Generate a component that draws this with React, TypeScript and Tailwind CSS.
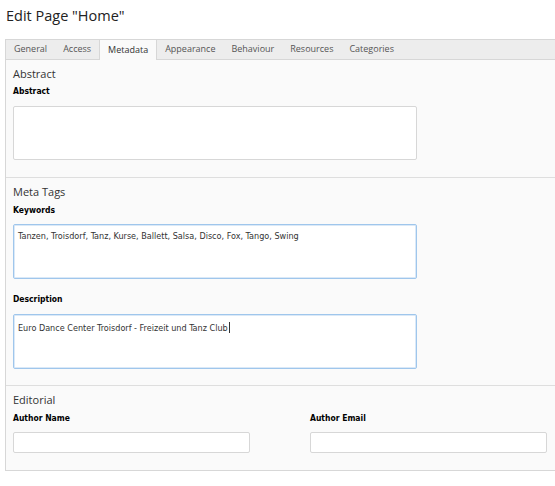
const tabs = [
  "General",
  "Access",
  "Metadata",
  "Appearance",
  "Behaviour",
  "Resources",
  "Categories",
];

function Tab({ label, active }: { label: string; active?: boolean }) {
  if (active) {
    return (
      <li className="-mb-px flex h-[21px] items-center border-x border-t border-[#d7d7d7] bg-[#fafafa] px-[8px] text-[#333]">
        {label}
      </li>
    );
  }
  return (
    <li className="flex h-[20px] items-center px-[8px] text-[#555]">{label}</li>
  );
}

function Label({ text }: { text: string }) {
  return (
    <div className="h-[12px] text-[8.5px] leading-[12px] font-bold text-black [font-family:'DejaVu_Sans_Condensed','DejaVu_Sans',sans-serif]">
      {text}
    </div>
  );
}

function Header({ text }: { text: string }) {
  return (
    <div className="h-[16px] text-[11px] leading-[16px] text-[#333]">{text}</div>
  );
}

function Area({
  value,
  blue,
  caret,
}: {
  value?: string;
  blue?: boolean;
  caret?: boolean;
}) {
  return (
    <div
      className={
        blue
          ? "h-[55px] w-[404px] rounded-[2px] border border-[#9fc6ec] bg-white px-[4px] py-[5px] text-[9px] leading-[12px] text-[#333] shadow-[inset_0_0_0_1px_#dbe9f7] [font-family:'DejaVu_Sans_Condensed','DejaVu_Sans',sans-serif]"
          : "h-[54px] w-[404px] rounded-[2px] border border-[#d7d7d7] bg-white px-[4px] py-[5px] text-[9px] leading-[12px] text-[#333] [font-family:'DejaVu_Sans_Condensed','DejaVu_Sans',sans-serif]"
      }
    >
      {value}
      {caret && (
        <span className="ml-px inline-block h-[11px] w-px translate-y-[2px] bg-[#333]" />
      )}
    </div>
  );
}

export default function App() {
  return (
    <div className="h-[486px] w-[555px] overflow-hidden bg-white [font-family:'Open_Sans',sans-serif]">
      <h1 className="pt-[5px] pl-[6px] text-[14.5px] leading-[22px] text-[#222]">
        Edit Page "Home"
      </h1>

      <div className="mt-[12px] ml-[5px] w-[560px]">
        <ul className="flex h-[21px] items-end border border-[#d7d7d7] bg-[#ededed] text-[9px]">
          {tabs.map((t) => (
            <Tab key={t} label={t} active={t === "Metadata"} />
          ))}
        </ul>

        <div className="border-x border-b border-[#d7d7d7] bg-[#fafafa]">
          <section className="border-b border-[#dedede] px-[7px] pt-[6px] pb-[17px]">
            <Header text="Abstract" />
            <div className="mt-[3px]">
              <Label text="Abstract" />
            </div>
            <div className="mt-[9px]">
              <Area />
            </div>
          </section>

          <section className="border-b border-[#dedede] px-[7px] pt-[6px] pb-[16px]">
            <Header text="Meta Tags" />
            <div className="mt-[4px]">
              <Label text="Keywords" />
            </div>
            <div className="mt-[8px]">
              <Area
                blue
                value="Tanzen, Troisdorf, Tanz, Kurse, Ballett, Salsa, Disco, Fox, Tango, Swing"
              />
            </div>
            <div className="mt-[14px]">
              <Label text="Description" />
            </div>
            <div className="mt-[9px]">
              <Area
                blue
                caret
                value="Euro Dance Center Troisdorf - Freizeit und Tanz Club"
              />
            </div>
          </section>

          <section className="px-[7px] pt-[6px] pb-[17px]">
            <Header text="Editorial" />
            <div className="mt-[4px] flex gap-[60px]">
              <div className="w-[237px]">
                <Label text="Author Name" />
                <div className="mt-[8px] h-[21px] rounded-[2px] border border-[#d7d7d7] bg-white" />
              </div>
              <div className="w-[237px]">
                <Label text="Author Email" />
                <div className="mt-[8px] h-[21px] rounded-[2px] border border-[#d7d7d7] bg-white" />
              </div>
            </div>
          </section>
        </div>
      </div>
    </div>
  );
}
